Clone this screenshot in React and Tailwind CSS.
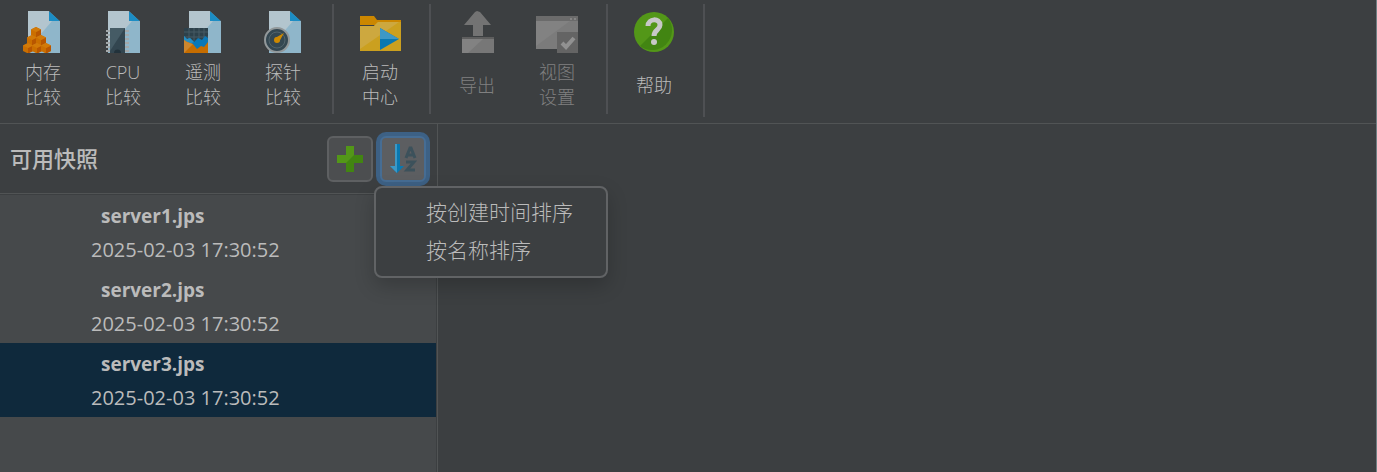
import { useState } from 'react'

// Page with a folded corner, shared by all comparison icons
function PageShape({ x = 5 }) {
  return (
    <g transform={`translate(${x} 0)`}>
      <path d="M0 0H21L32 10V42H0Z" fill="#b3c5ce" />
      <path d="M24 10H32V42H0V38Z" fill="#8fb6ca" />
      <path d="M21 0L32 10H21Z" fill="#1c8dc4" />
      <path d="M21 0H32V10Z" fill="#3c3f41" />
    </g>
  )
}

function Cube({ x, y }) {
  return (
    <g transform={`translate(${x} ${y})`}>
      <path d="M5 0L10 2.5V8L5 10.5L0 8V2.5Z" fill="#cb6f00" />
      <path d="M5 5L10 2.5V8L5 10.5Z" fill="#b85600" />
      <path d="M0 2.5L5 5L10 2.5L5 0Z" fill="#d27a08" />
    </g>
  )
}

function MemoryIcon() {
  return (
    <svg width="44" height="42" viewBox="-2 0 44 42">
      <PageShape />
      <Cube x={8} y={16} />
      <Cube x={4} y={24} />
      <Cube x={13} y={24} />
      <Cube x={0} y={32} />
      <Cube x={9} y={32} />
      <Cube x={18} y={32} />
    </svg>
  )
}

function CpuIcon() {
  return (
    <svg width="44" height="42" viewBox="-2 0 44 42">
      <PageShape />
      {[20, 24, 28, 32, 36, 40].map(y => (
        <path key={y} d={`M3 ${y}H26`} stroke="#a3a8aa" strokeWidth="2" />
      ))}
      <rect x="7" y="17" width="15" height="25" fill="#334650" />
      <path d="M7 17H22L7 40Z" fill="#455b65" />
      <path d="M11 42a3.5 3.5 0 0 1 7 0Z" fill="#22323b" />
    </svg>
  )
}

function TelemetryIcon() {
  return (
    <svg width="44" height="42" viewBox="-1 0 44 42">
      <PageShape x={7} />
      <rect x="2" y="17" width="24" height="25" fill="#2d414b" />
      <path d="M2 21H26M2 26H26M7 17V30M12 17V30M17 17V30M22 17V30" stroke="#465a64" />
      <path d="M2 25L5 28L8 27L12 31L16 27L20 29L23 25L26 27V42H2Z" fill="#0878b8" />
      <path d="M2 25L5 28L8 27L12 31L4 34L2 33Z" fill="#278ec2" />
      <path d="M2 29L5 31L8 32L11 33L15 38L19 35L22 36L26 31V42H2Z" fill="#c66d00" />
      <path d="M2 29L5 31L8 32L11 33L2 42Z" fill="#cd862d" />
    </svg>
  )
}

function ProbeIcon() {
  return (
    <svg width="44" height="42" viewBox="-1 0 44 42">
      <PageShape x={7} />
      <circle cx="15" cy="29" r="12" fill="#344751" stroke="#92989a" strokeWidth="2" />
      <circle cx="15" cy="29" r="8" fill="none" stroke="#52646c" strokeWidth="1" />
      <path d="M13 27L22 22L17 31Z" fill="#ce8900" />
      <circle cx="15" cy="29" r="3" fill="#ce8900" />
    </svg>
  )
}

function StartCenterIcon() {
  return (
    <svg width="44" height="42" viewBox="-2 0 44 42">
      <path d="M0 5H14L17 9H41V14H0Z" fill="#cc8700" />
      <path d="M0 15H14L18 11H41V40H0Z" fill="#cba01f" />
      <path d="M0 15H14L18 11H39L0 38Z" fill="#cda83f" />
      <path d="M20 17L39 28L20 39Z" fill="#0878b1" />
      <path d="M20 17L39 28H20Z" fill="#3d98c5" />
    </svg>
  )
}

function ExportIcon() {
  return (
    <svg width="44" height="42" viewBox="-2 0 44 42">
      <path d="M20 0L23 1L34 14H26V25H16V14H7L18 1Z" fill="#737373" />
      <rect x="5" y="26" width="32" height="2" fill="#5e5e5e" />
      <rect x="5" y="28" width="32" height="14" fill="#777777" />
      <path d="M5 28H26L11 42H5Z" fill="#828282" />
    </svg>
  )
}

function ViewSettingsIcon() {
  return (
    <svg width="44" height="42" viewBox="-1 0 44 42">
      <rect y="5" width="42" height="33" fill="#7b7b7b" />
      <path d="M0 10H34L0 35Z" fill="#828282" />
      <rect y="5" width="42" height="5" fill="#6b6b6b" />
      <path d="M34 8H36M38 8H40" stroke="#858585" strokeWidth="2" />
      <rect x="21" y="21" width="21" height="21" fill="#646464" />
      <path d="M26 32L30 36L38 27" fill="none" stroke="#919191" strokeWidth="4" />
    </svg>
  )
}

function HelpIcon() {
  return (
    <svg width="42" height="42" viewBox="0 0 42 42">
      <circle cx="21" cy="21" r="20" fill="#539718" />
      <path d="M35 7A20 20 0 0 1 7 35Z" fill="#428512" />
      <path d="M15 15C15 7 27 7 27 14C27 19 21 19 21 25" fill="none" stroke="#c8c8c8" strokeWidth="5" />
      <circle cx="21" cy="31" r="3" fill="#c8c8c8" />
    </svg>
  )
}

function AddIcon() {
  return (
    <svg width="26" height="26" viewBox="0 0 26 26">
      <path d="M9 0H17V9H26V17H17V26H9V17H0V9H9Z" fill="#428512" />
      <path d="M9 0H17V9L9 17H0V9H9Z" fill="#539718" />
    </svg>
  )
}

function SortIcon() {
  return (
    <svg width="28" height="30" viewBox="0 0 28 30">
      <path d="M6 0H11V22H15L8 29L1 22H6Z" fill="#0878b1" />
      <path d="M6 0H8V29L1 22H6Z" fill="#3d98c5" />
      <path d="M17 14L21 4H22L26 14M19 11H25" fill="none" stroke="#3c515b" strokeWidth="3" />
      <path d="M17 18H25L18 26H26" fill="none" stroke="#3c515b" strokeWidth="3" />
    </svg>
  )
}

const toolGroups = [
  [
    { id: 'memory', lines: ['内存', '比较'], Icon: MemoryIcon },
    { id: 'cpu', lines: ['CPU', '比较'], Icon: CpuIcon },
    { id: 'telemetry', lines: ['遥测', '比较'], Icon: TelemetryIcon },
    { id: 'probe', lines: ['探针', '比较'], Icon: ProbeIcon },
  ],
  [{ id: 'start', lines: ['启动', '中心'], Icon: StartCenterIcon }],
  [
    { id: 'export', lines: ['导出'], Icon: ExportIcon, disabled: true },
    { id: 'view', lines: ['视图', '设置'], Icon: ViewSettingsIcon, disabled: true },
  ],
  [{ id: 'help', lines: ['帮助'], Icon: HelpIcon }],
]

const snapshots = [
  { name: 'server1.jps', created: '2025-02-03 17:30:52' },
  { name: 'server2.jps', created: '2025-02-03 17:30:52' },
  { name: 'server3.jps', created: '2025-02-03 17:30:52' },
]

export default function App() {
  const [selected, setSelected] = useState('server3.jps')
  const [menuOpen, setMenuOpen] = useState(true)

  return (
    <div className="flex flex-col min-h-screen bg-[#3c3f41] text-[#bbbbbb] border-r border-[#6e7f83] font-['Open_Sans','Noto_Sans_CJK_SC',sans-serif]">
      {/* Toolbar */}
      <header className="flex pl-[3px] pt-1 pb-[6px] border-b border-[#515455]">
        {toolGroups.map((group, i) => (
          <div key={i} className="group flex">
            {group.map(({ id, lines, Icon, disabled }) => (
              <button
                key={id}
                disabled={disabled}
                className="flex flex-col items-center w-20 pt-[7px] disabled:text-[#808080]"
              >
                <Icon />
                <span className="flex flex-col justify-center h-16 text-lg leading-[25px] font-light">
                  {lines.map(line => <span key={line}>{line}</span>)}
                </span>
              </button>
            ))}
            <div className="w-[2px] ml-[9px] mr-[6px] mb-[3px] group-last:mb-0 bg-[#4e5053]" />
          </div>
        ))}
      </header>

      <div className="flex flex-1">
        {/* Snapshot list */}
        <aside className="flex flex-col w-[438px] border-r border-[#515455]">
          <div className="flex items-center h-[70px] pl-[10px] pr-[11px] gap-[7px] border-b border-[#515455]">
            <h2 className="flex-1 text-[22px] font-medium">可用快照</h2>
            <button
              aria-label="添加快照"
              className="flex items-center justify-center size-[46px] rounded-md border-2 border-[#5e6062] bg-[#4c4e50]"
            >
              <AddIcon />
            </button>
            <div className="relative">
              <button
                aria-label="排序"
                aria-expanded={menuOpen}
                onClick={() => setMenuOpen(!menuOpen)}
                className="flex items-center justify-center size-[46px] rounded-md border-2 border-[#466d94] bg-[#5c5e61] ring-4 ring-[#3d6185]"
              >
                <SortIcon />
              </button>
              {menuOpen && (
                <div
                  role="menu"
                  className="absolute top-full -left-[6px] mt-1 z-10 flex flex-col w-[234px] py-[6px] rounded-lg border-2 border-[#616365] bg-[#3c3f41] shadow-[0_8px_20px_rgba(0,0,0,0.2)]"
                >
                  {['按创建时间排序', '按名称排序'].map(label => (
                    <button
                      key={label}
                      role="menuitem"
                      className="pl-[50px] h-[38px] text-left text-[21px] font-light"
                    >
                      {label}
                    </button>
                  ))}
                </div>
              )}
            </div>
          </div>

          <ul className="flex-1 mt-px mr-px bg-[#46494b]">
            {snapshots.map(s => (
              <li key={s.name}>
                <button
                  onClick={() => setSelected(s.name)}
                  className={`flex flex-col items-start w-full h-[74px] pt-[5px] leading-[33px] ${
                    selected === s.name ? 'bg-[#0f293c]' : ''
                  }`}
                >
                  <span className="pl-[101px] text-[19px] font-bold">{s.name}</span>
                  <span className="pl-[91px] text-[20px]">{s.created}</span>
                </button>
              </li>
            ))}
          </ul>
        </aside>

        <main className="flex-1" />
      </div>
    </div>
  )
}
